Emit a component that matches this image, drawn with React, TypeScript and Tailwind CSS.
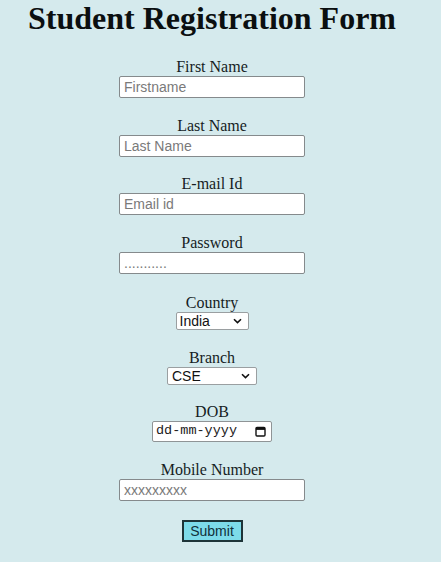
import React from 'react';

const serif = { fontFamily: '"Liberation Serif", "Times New Roman", serif' };

function Chevron() {
  return (
    <svg width="9" height="6" viewBox="0 0 9 6" className="shrink-0">
      <path d="M1 1.2 L4.5 4.6 L8 1.2" fill="none" stroke="#111" strokeWidth="1.6" />
    </svg>
  );
}

function Calendar() {
  return (
    <svg width="11" height="11" viewBox="0 0 11 11" className="shrink-0">
      <rect x="1" y="1.5" width="9" height="8.5" rx="1" fill="none" stroke="#111" strokeWidth="1.4" />
      <rect x="1" y="1.5" width="9" height="2.4" fill="#111" />
    </svg>
  );
}

function Field({ label, top, children }: { label: string; top: string; children: React.ReactNode }) {
  return (
    <div className={`flex flex-col items-center ${top}`}>
      <label className="text-[16px] leading-[19px] text-[#151d1f]" style={serif}>{label}</label>
      {children}
    </div>
  );
}

const inputCls =
  'w-[186px] h-[22px] bg-white border border-[#858a8c] rounded-[2px] px-[4px] text-[14px] text-[#222] placeholder:text-[#7a7a7a] outline-none font-["Liberation_Sans",Arial,sans-serif]';

export default function App() {
  return (
    <div className="min-h-screen w-full bg-[#d5eaed]">
      <form className="w-[424px] flex flex-col items-center" onSubmit={e => e.preventDefault()}>
        <h1 className="text-[32px] leading-[37px] font-bold text-[#0b0f10]" style={serif}>
          Student Registration Form
        </h1>

        <Field label="First Name" top="mt-[20px]">
          <input className={inputCls} placeholder="Firstname" />
        </Field>

        <Field label="Last Name" top="mt-[18px]">
          <input className={inputCls} placeholder="Last Name" />
        </Field>

        <Field label="E-mail Id" top="mt-[17px]">
          <input className={inputCls} placeholder="Email id" />
        </Field>

        <Field label="Password" top="mt-[18px]">
          <input className={inputCls} placeholder="..........." />
        </Field>

        <Field label="Country" top="mt-[19px]">
          <div className="w-[73px] h-[18px] bg-white border border-[#9a9fa1] rounded-[2px] flex items-center pl-[3px] pr-[6px]">
            <select className="appearance-none bg-transparent flex-1 text-[14px] leading-[16px] text-[#111] outline-none font-['Liberation_Sans',Arial,sans-serif]">
              <option>India</option>
            </select>
            <Chevron />
          </div>
        </Field>

        <Field label="Branch" top="mt-[18px]">
          <div className="w-[90px] h-[18px] bg-white border border-[#9a9fa1] rounded-[2px] flex items-center pl-[4px] pr-[6px]">
            <select className="appearance-none bg-transparent flex-1 text-[14px] leading-[16px] text-[#111] outline-none font-['Liberation_Sans',Arial,sans-serif]">
              <option>CSE</option>
            </select>
            <Chevron />
          </div>
        </Field>

        <Field label="DOB" top="mt-[17px]">
          <div className="w-[120px] h-[21px] bg-white border border-[#8f9496] rounded-[2px] flex items-center justify-between pl-[3px] pr-[5px]">
            <span className="text-[13.5px] text-[#222] font-['Liberation_Mono','Courier_New',monospace]">dd-mm-yyyy</span>
            <Calendar />
          </div>
        </Field>

        <Field label="Mobile Number" top="mt-[18px]">
          <input className={inputCls} placeholder="xxxxxxxxx" />
        </Field>

        <button
          type="submit"
          className="mt-[19px] w-[61px] h-[22px] bg-[#7ddbe9] border-2 border-[#1d3438] text-[14px] leading-[16px] text-[#10303a] font-['Liberation_Sans',Arial,sans-serif]"
        >
          Submit
        </button>
      </form>
    </div>
  );
}
